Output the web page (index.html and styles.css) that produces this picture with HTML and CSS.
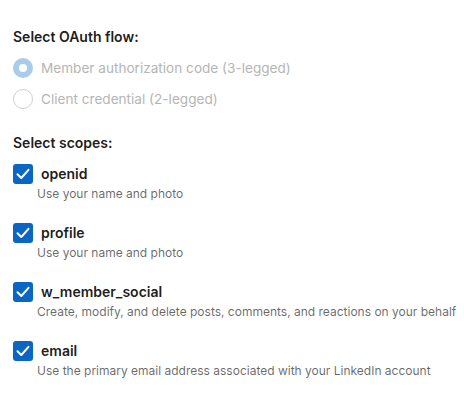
FILE: index.html
```html
<!DOCTYPE html>
<html>
<head>
<meta charset="utf-8">
<link rel="stylesheet" href="styles.css">
</head>
<body>
<div class="panel">
  <div class="heading">Select OAuth flow:</div>
  <div class="radios">
    <div class="radio-row">
      <span class="radio radio-checked"></span>
      <span class="radio-label">Member authorization code (3-legged)</span>
    </div>
    <div class="radio-row">
      <span class="radio"></span>
      <span class="radio-label">Client credential (2-legged)</span>
    </div>
  </div>
  <div class="heading heading-scopes">Select scopes:</div>
  <div class="scopes">
    <div class="scope">
      <div class="check-row">
        <span class="checkbox"><svg viewBox="0 0 20 20" width="20" height="20"><path d="M4.5 10.2 L8.3 14 L15.5 5.8" fill="none" stroke="#fff" stroke-width="2" stroke-linecap="round" stroke-linejoin="round"/></svg></span>
        <span class="scope-name">openid</span>
      </div>
      <div class="scope-desc">Use your name and photo</div>
    </div>
    <div class="scope">
      <div class="check-row">
        <span class="checkbox"><svg viewBox="0 0 20 20" width="20" height="20"><path d="M4.5 10.2 L8.3 14 L15.5 5.8" fill="none" stroke="#fff" stroke-width="2" stroke-linecap="round" stroke-linejoin="round"/></svg></span>
        <span class="scope-name">profile</span>
      </div>
      <div class="scope-desc">Use your name and photo</div>
    </div>
    <div class="scope">
      <div class="check-row">
        <span class="checkbox"><svg viewBox="0 0 20 20" width="20" height="20"><path d="M4.5 10.2 L8.3 14 L15.5 5.8" fill="none" stroke="#fff" stroke-width="2" stroke-linecap="round" stroke-linejoin="round"/></svg></span>
        <span class="scope-name">w_member_social</span>
      </div>
      <div class="scope-desc">Create, modify, and delete posts, comments, and reactions on your behalf</div>
    </div>
    <div class="scope">
      <div class="check-row">
        <span class="checkbox"><svg viewBox="0 0 20 20" width="20" height="20"><path d="M4.5 10.2 L8.3 14 L15.5 5.8" fill="none" stroke="#fff" stroke-width="2" stroke-linecap="round" stroke-linejoin="round"/></svg></span>
        <span class="scope-name">email</span>
      </div>
      <div class="scope-desc">Use the primary email address associated with your LinkedIn account</div>
    </div>
  </div>
</div>
</body>
</html>
```
FILE: styles.css
```css
html, body {
  margin: 0;
  padding: 0;
  background: #ffffff;
}
body {
  font-family: Inter, "Noto Sans", "Liberation Sans", sans-serif;
  -webkit-font-smoothing: antialiased;
}
.panel {
  padding: 27px 0 0 13px;
  display: flex;
  flex-direction: column;
}
.heading {
  font-size: 14px;
  line-height: 20px;
  font-weight: 600;
  color: rgba(0, 0, 0, 0.9);
}
.heading-scopes {
  margin-top: 24px;
}
.radios {
  margin-top: 11px;
  display: flex;
  flex-direction: column;
  gap: 11px;
}
.radio-row {
  display: flex;
  align-items: center;
  gap: 8px;
  height: 20px;
}
.radio {
  box-sizing: border-box;
  width: 20px;
  height: 20px;
  border-radius: 50%;
  border: 1px solid #cfcfcf;
  background: #fff;
  flex: none;
}
.radio-checked {
  border: 6px solid #a9cde8;
  background: #fff;
}
.radio-label {
  font-size: 13.6px;
  line-height: 20px;
  color: #b5b5b5;
}
.scopes {
  margin-top: 11px;
  display: flex;
  flex-direction: column;
  gap: 21px;
}
.scope {
  display: flex;
  flex-direction: column;
  gap: 2px;
}
.check-row {
  display: flex;
  align-items: center;
  gap: 8px;
  height: 20px;
}
.checkbox {
  width: 20px;
  height: 20px;
  border-radius: 3px;
  background: #0a66c2;
  display: flex;
  flex: none;
}
.scope-name {
  font-size: 14px;
  line-height: 20px;
  font-weight: 600;
  color: rgba(0, 0, 0, 0.9);
}
.scope-desc {
  padding-left: 24px;
  font-size: 12px;
  line-height: 16px;
  color: rgba(0, 0, 0, 0.6);
}
```
